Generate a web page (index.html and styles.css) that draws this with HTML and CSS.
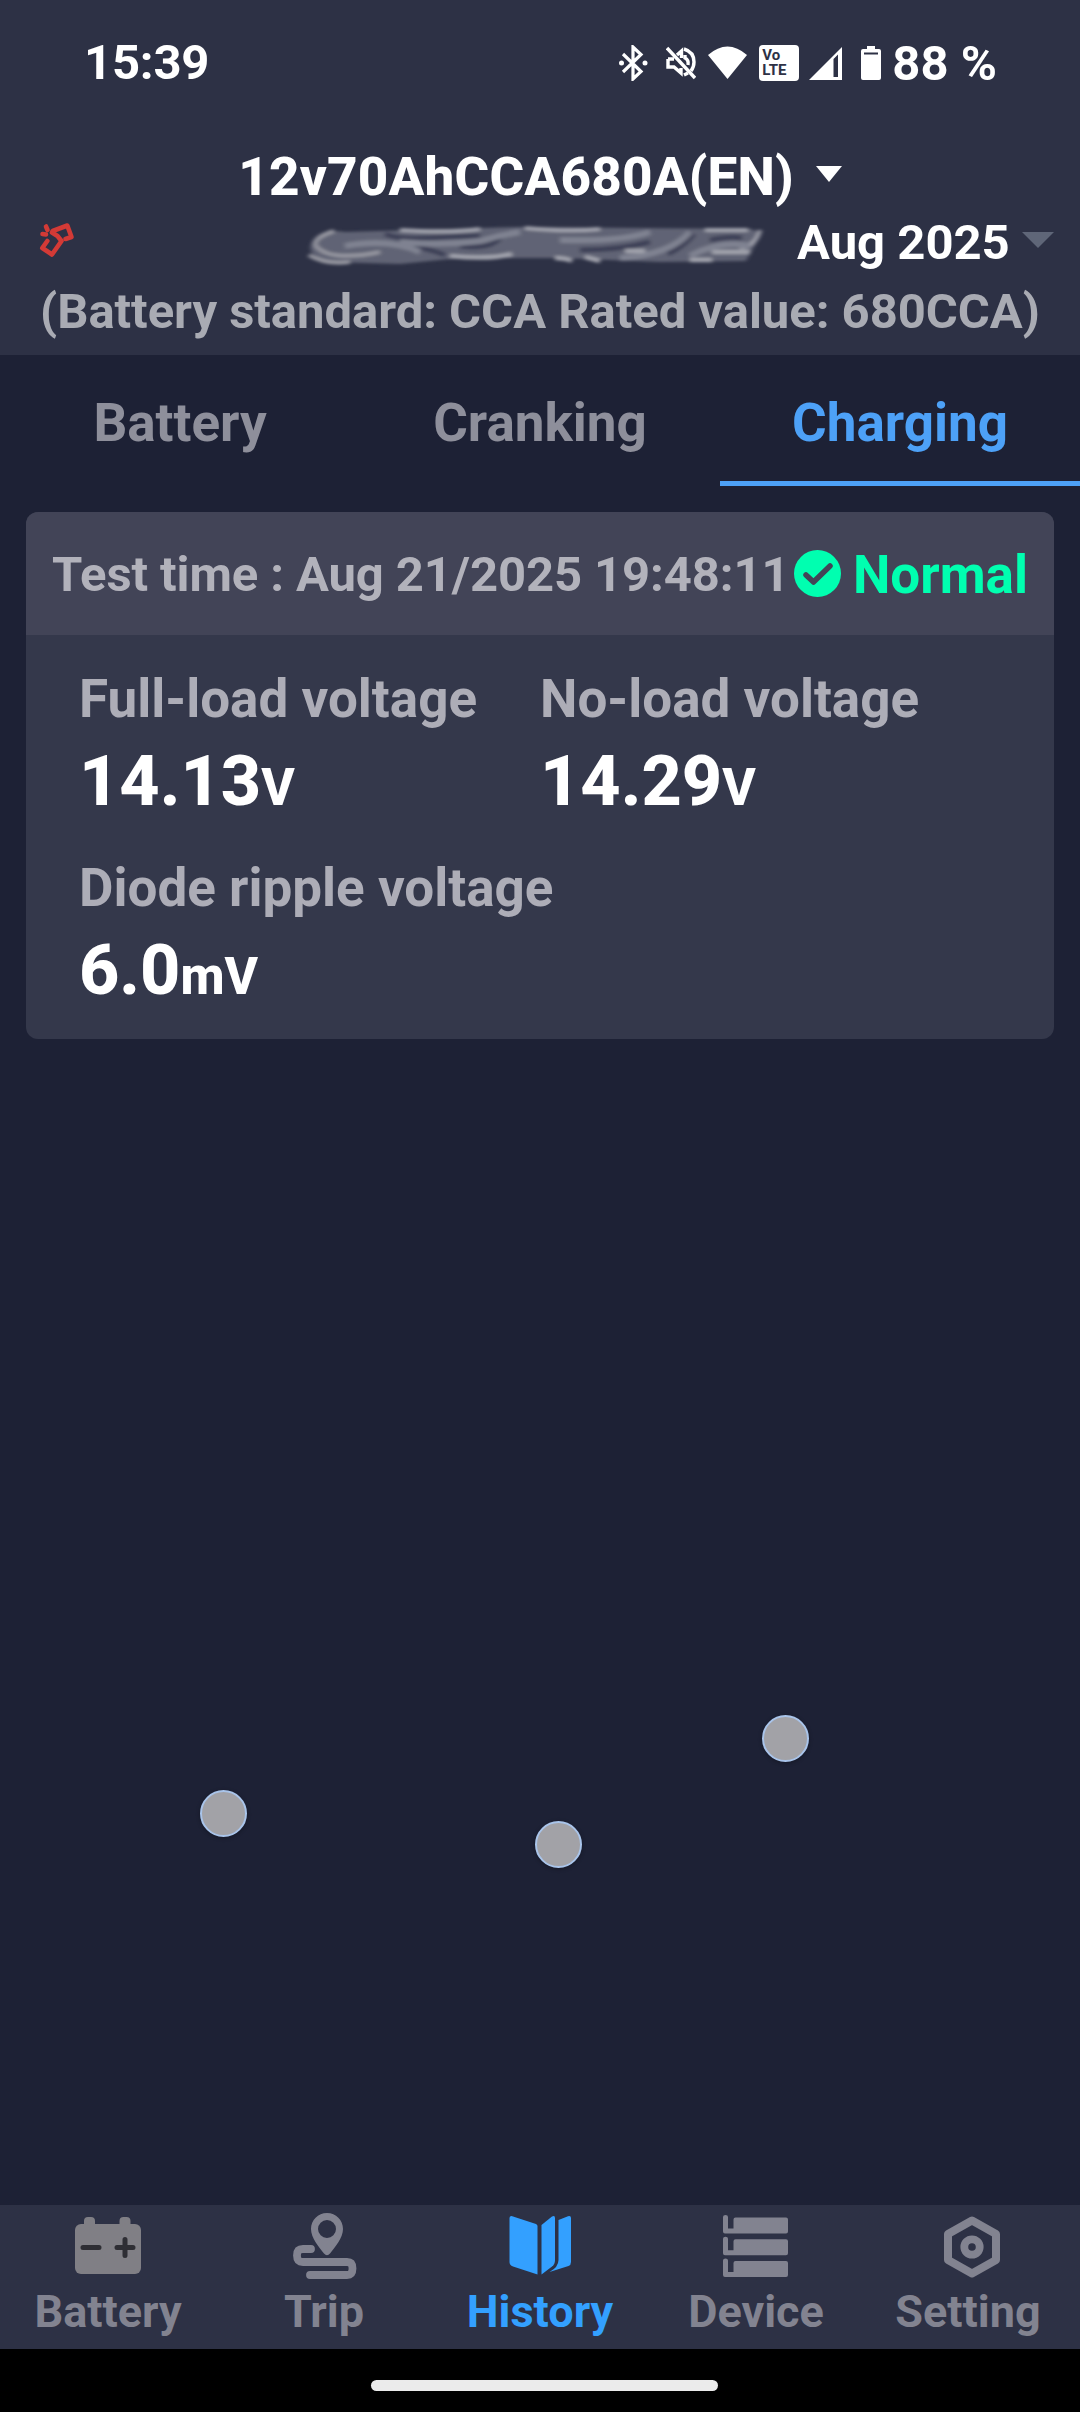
FILE: index.html
```html
<!DOCTYPE html>
<html lang="en">
<head>
    <meta charset="UTF-8">
    <title>Battery Monitor</title>
    <link rel="stylesheet" href="styles.css">
</head>
<body>
    <!-- Header -->
    <header class="header">
        <div class="status-bar">
            <span class="clock">15:39</span>
            <div class="status-icons">
                <svg class="bt" width="29" height="36" viewBox="0 0 29 36" fill="none" stroke="#fff" stroke-width="3.2">
                    <path d="M4 9 L22 26.5 L14 34 V2 L22 9.5 L4 27" stroke-linejoin="miter"/>
                    <circle cx="2.5" cy="18" r="2.5" fill="#fff" stroke="none"/>
                    <circle cx="26" cy="18" r="2.5" fill="#fff" stroke="none"/>
                </svg>
                <svg class="mute" width="30" height="34" viewBox="0 0 30 34" fill="none" stroke="#fff" stroke-width="3.4">
                    <path d="M1 2 L29 32"/>
                    <path d="M2 13 V21 H8 L15 27 V22 M2 13 H8 M11 9 L15.500 5 V12"/>
                    <path d="M18 3 Q28 6 28 16 Q28 21 25 25 M19 9 V12 Q23 14 22 19 M18 29 L22 27"/>
                </svg>
                <svg class="wifi" width="39" height="34" viewBox="0 0 39 34">
                    <path d="M0 9 Q19.500 -8 39 9 L19.500 33 Z" fill="#fff"/>
                </svg>
                <span class="volte">Vo<br>LTE</span>
                <svg class="signal" width="33" height="33" viewBox="0 0 33 33">
                    <path d="M0 33 L33 0 V33 Z M24.500 12 V30 H29 V7.500 Z" fill="#fff" fill-rule="evenodd"/>
                </svg>
                <svg class="cell" width="20" height="34" viewBox="0 0 20 34">
                    <path d="M6 0 H14 V3 H18 Q20 3 20 5 V32 Q20 34 18 34 H2 Q0 34 0 32 V5 Q0 3 2 3 H6 Z M3 6.500 V8.500 H17 V6.500 Z" fill="#fff" fill-rule="evenodd"/>
                </svg>
                <span class="percent">88 %</span>
            </div>
        </div>
        <div class="title-row">
            <h1 class="title">12v70AhCCA680A(EN)</h1>
            <svg class="title-arrow" width="26" height="16" viewBox="0 0 26 16"><path d="M0 0 H26 L13 16 Z" fill="#fff"/></svg>
        </div>
        <div class="date-row">
            <svg class="unlinked" width="36" height="36" viewBox="39 222 36 36" fill="none" stroke="#d33a36" stroke-width="4.600" stroke-linejoin="round" stroke-linecap="round">
                <path d="M52.700 231 L67.300 225.500 L71.500 237 L65.500 239"/>
                <path d="M47.300 241 L42.300 248 L52 254.500 L61.500 241 L57.500 236 L52 232.500"/>
                <path d="M46 226.500 L47.500 230 M42.500 234 L46 234.500"/>
            </svg>
            <svg class="smear" width="470" height="56" viewBox="300 218 470 56">
                <defs><filter id="soft" x="-5%" y="-20%" width="110%" height="140%"><feGaussianBlur stdDeviation="2.200 1.600"/></filter></defs>
                <g filter="url(#soft)" fill="none">
                    <path d="M312 242 Q320 228 345 232 L520 227 L750 229 Q762 230 756 243 L746 261 L660 262 L560 258 L460 258 L400 264 L330 262 Q305 255 312 242 Z" fill="#606375"/>
                    <path d="M334 231 Q312 238 316 246 Q330 262 380 252 M309 255 Q325 265 350 262" stroke="#94959f" stroke-width="4"/>
                    <path d="M385 234 Q400 240 430 238 Q460 236 480 236 M395 244 Q425 247 445 255 M460 246 Q490 250 500 238 M580 250 Q620 250 650 242 M668 254 Q685 246 694 234 M710 240 Q730 236 742 238" stroke="#3c4056" stroke-width="5"/>
                    <path d="M400 230 Q450 233 480 229 M525 228 Q570 232 600 229 M705 230 H748 M760 230 Q756 246 740 248" stroke="#9fa0ab" stroke-width="4"/>
                    <path d="M345 246 Q390 238 420 252 M400 242 Q440 246 480 241 Q500 235 520 232 M560 240 Q620 242 650 232 M620 258 Q670 255 690 232 M690 256 Q720 240 750 246" stroke="#7f8291" stroke-width="6"/>
                    <path d="M555 258 Q565 258 572 261 M585 257 L600 261 M625 251 H645 M712 252 H750 M690 260 H712 M450 256 Q490 260 512 254" stroke="#a0a2ac" stroke-width="4.500"/>
                </g>
            </svg>
            <span class="month">Aug 2025</span>
            <svg class="month-arrow" width="32" height="16" viewBox="0 0 32 16"><path d="M0 0 H32 L16 16 Z" fill="#5f6678"/></svg>
        </div>
        <p class="standard">(Battery standard: CCA Rated value: 680CCA)</p>
    </header>

    <!-- Tabs -->
    <nav class="tabs">
        <a class="tab">Battery</a>
        <a class="tab">Cranking</a>
        <a class="tab active">Charging</a>
    </nav>

    <!-- Test result -->
    <main class="content">
        <section class="card">
            <div class="card-head">
                <span class="test-time">Test time : Aug 21/2025 19:48:11</span>
                <svg class="check" width="47" height="47" viewBox="0 0 47 47">
                    <circle cx="23.500" cy="23.500" r="23.500" fill="#00ffb0"/>
                    <path d="M12 25 L19.500 32 L36 16" fill="none" stroke="#424457" stroke-width="5.500" stroke-linecap="round" stroke-linejoin="round"/>
                </svg>
                <span class="result">Normal</span>
            </div>
            <div class="card-body">
                <div class="reading">
                    <div class="label">Full-load voltage</div>
                    <div class="value">14.13<small>V</small></div>
                </div>
                <div class="reading">
                    <div class="label">No-load voltage</div>
                    <div class="value">14.29<small>V</small></div>
                </div>
                <div class="reading">
                    <div class="label">Diode ripple voltage</div>
                    <div class="value">6.0<small>mV</small></div>
                </div>
            </div>
        </section>
    </main>

    <!-- Touch points -->
    <i class="touch touch-left"></i>
    <i class="touch touch-middle"></i>
    <i class="touch touch-right"></i>

    <!-- Bottom navigation -->
    <nav class="bottom-nav">
        <a class="nav-item">
            <svg width="72" height="72" viewBox="72 2211 72 72">
                <path d="M84 2225 V2221 Q84 2217 88 2217 H91 Q95 2217 95 2221 V2225 M119.500 2225 V2221 Q119.500 2217 123.500 2217 H126.500 Q130.500 2217 130.500 2221 V2225" fill="#807f85"/>
                <rect x="75" y="2224" width="66" height="50" rx="6" fill="#807f85"/>
                <path d="M83 2247.500 H99 M117 2247.500 H133 M125 2239.500 V2255.500" stroke="#2e2e34" stroke-width="5" stroke-linecap="round"/>
            </svg>
            <span>Battery</span>
        </a>
        <a class="nav-item">
            <svg width="72" height="72" viewBox="288 2211 72 72">
                <path d="M327 2213 C318 2213 311 2220 311 2229 C311 2238 319 2247 324 2253.500 Q327 2257 330 2253.500 C335 2247 343 2238 343 2229 C343 2220 336 2213 327 2213 Z M327 2220 A9 9 0 1 1 327 2238 A9 9 0 1 1 327 2220 Z" fill="#828390" fill-rule="evenodd"/>
                <path d="M311 2249 H303 Q297 2249 297 2255.500 Q297 2262 303 2262 H347 Q352.500 2262 352.500 2268.500 Q352.500 2275 347 2275 H310" fill="none" stroke="#828390" stroke-width="7.800" stroke-linecap="round"/>
            </svg>
            <span>Trip</span>
        </a>
        <a class="nav-item active">
            <svg width="72" height="72" viewBox="504 2211 72 72" fill="#33a0ff">
                <path d="M511.500 2216 L536 2224 Q537.500 2225 537.500 2226 V2274.500 L513 2266.500 Q509.500 2265 509.500 2262 V2218 Q509.500 2216 511.500 2216 Z"/>
                <path d="M541.500 2225 L552 2216.500 Q555 2215 555 2218 V2260 Q555 2264 552 2266.500 L541.500 2274.500 Z"/>
                <path d="M558.500 2220 L568 2216.300 Q571 2215.500 571 2218 V2262 Q571 2265 568.500 2266 L549.500 2272 Q558.500 2267 558.500 2260 Z"/>
            </svg>
            <span>History</span>
        </a>
        <a class="nav-item">
            <svg width="72" height="72" viewBox="720 2211 72 72">
                <g id="drawer" fill="#828390">
                    <path d="M723 2217 Q723 2215 725.500 2215 Q728 2215 728 2217 V2228.500 H733.500 V2219.500 Q733.500 2217.500 735.500 2217.500 H786 Q788 2217.500 788 2219.500 V2231.500 Q788 2233.500 786 2233.500 H725 Q723 2233.500 723 2231.500 Z"/>
                </g>
                <use href="#drawer" y="21.750"/>
                <use href="#drawer" y="43.500"/>
            </svg>
            <span>Device</span>
        </a>
        <a class="nav-item setting">
            <svg width="72" height="72" viewBox="936 2211 72 72" fill="none" stroke="#828390">
                <path d="M972 2220.500 L996 2234 V2260 L972 2273.500 L948 2260 V2234 Z" stroke-width="8" stroke-linejoin="round"/>
                <circle cx="972" cy="2247" r="7.700" stroke-width="7.800"/>
            </svg>
            <span>Setting</span>
        </a>
    </nav>
    <footer class="gesture-bar"><div class="pill"></div></footer>
</body>
</html>
```
FILE: styles.css
```css
* {
    margin: 0;
    padding: 0;
    box-sizing: border-box;
}

body {
    font-family: Roboto, sans-serif;
    font-weight: 700;
    background-color: #1d2135;
    color: white;
    display: flex;
    flex-direction: column;
    width: 1080px;
    height: 2412px;
    overflow: hidden;
    white-space: nowrap;
}

svg {
    display: block;
    flex-shrink: 0;
}

.header {
    background-color: #2d3145;
    height: 355px;
}

.status-bar {
    height: 126px;
    padding: 0 83px 0 84px;
    display: flex;
    justify-content: space-between;
    align-items: center;
    font-size: 49px;
}

.clock {
    margin-bottom: 2px;
    letter-spacing: -0.2px;
}

.status-icons {
    display: flex;
    align-items: center;
}

.mute {
    margin-left: 18px;
}

.wifi {
    margin-left: 12px;
}

.volte {
    width: 40px;
    height: 36px;
    margin: 0 10px 0 12px;
    padding: 3px 0 0 3px;
    border-radius: 4px;
    background-color: white;
    color: #2d3145;
    font-size: 15px;
    line-height: 15px;
}

.cell {
    margin: 0 11px 0 19px;
}

.title-row {
    height: 91px;
    padding-top: 10px;
    display: flex;
    justify-content: center;
    align-items: center;
    gap: 22px;
}

.title {
    font-size: 53px;
    font-weight: 800;
    letter-spacing: 0.2px;
}

.title-arrow {
    margin-bottom: 5px;
}

.date-row {
    height: 50px;
    padding: 0 26px 0 39px;
    display: flex;
    align-items: center;
}

.unlinked,
.month-arrow {
    margin-bottom: 4px;
}

.smear {
    margin: 8px 0 0 225px;
}

.month {
    margin-left: 27px;
    font-size: 49px;
}

.month-arrow {
    margin-left: auto;
}

.standard {
    height: 88px;
    line-height: 90px;
    text-align: center;
    font-size: 49px;
    letter-spacing: -0.04px;
    color: #a9abb3;
}

.tabs {
    display: flex;
    height: 131px;
}

.tab {
    flex: 1;
    border-bottom: 5px solid transparent;
    color: #8e8f9b;
    font-size: 53px;
    line-height: 136px;
    text-align: center;
}

.tab.active {
    color: #4da1f7;
    border-color: #4da1f7;
}

.content {
    flex: 1;
    padding: 26px;
}

.card {
    height: 527px;
    border-radius: 12px;
    background-color: #34384b;
    overflow: hidden;
}

.card-head {
    height: 123px;
    padding: 0 26px;
    display: flex;
    align-items: center;
    background-color: #424457;
}

.test-time {
    padding-top: 2px;
    font-size: 49px;
    letter-spacing: -0.1px;
    color: #b2b2bb;
}

.check {
    margin-left: 4px;
}

.result {
    margin-left: auto;
    padding-top: 2px;
    font-size: 53px;
    color: #00ffb0;
}

.card-body {
    padding: 32px 53px;
    display: grid;
    grid-template-columns: 461px 1fr;
    grid-auto-rows: 189px;
}

.label {
    height: 64px;
    line-height: 64px;
    font-size: 53px;
    color: #adadb7;
}

.value {
    height: 100px;
    line-height: 100px;
    font-size: 70px;
    font-weight: 800;
}

.value small {
    font-size: 51px;
}

.touch {
    position: absolute;
    width: 47px;
    height: 47px;
    border: 2px solid #a9c4ea;
    border-radius: 50%;
    background-color: #a2a2a7;
    box-shadow: 0 1px 4px rgba(0, 0, 0, 0.3);
}

.touch-left {
    left: 200px;
    top: 1790px;
}

.touch-middle {
    left: 535px;
    top: 1821px;
}

.touch-right {
    left: 762px;
    top: 1715px;
}

.bottom-nav {
    height: 144px;
    padding-top: 6px;
    display: flex;
    background-color: #2d3145;
}

.nav-item {
    flex: 1;
    display: flex;
    flex-direction: column;
    align-items: center;
    color: #828390;
    font-size: 45px;
    line-height: 58px;
}

.nav-item.active {
    color: #33a0ff;
}

.setting span {
    margin-right: 8px;
}

.gesture-bar {
    height: 63px;
    padding-top: 31px;
    background-color: black;
}

.pill {
    width: 347px;
    height: 11px;
    margin-left: 371px;
    border-radius: 6px;
    background-color: #ebebeb;
}
```
